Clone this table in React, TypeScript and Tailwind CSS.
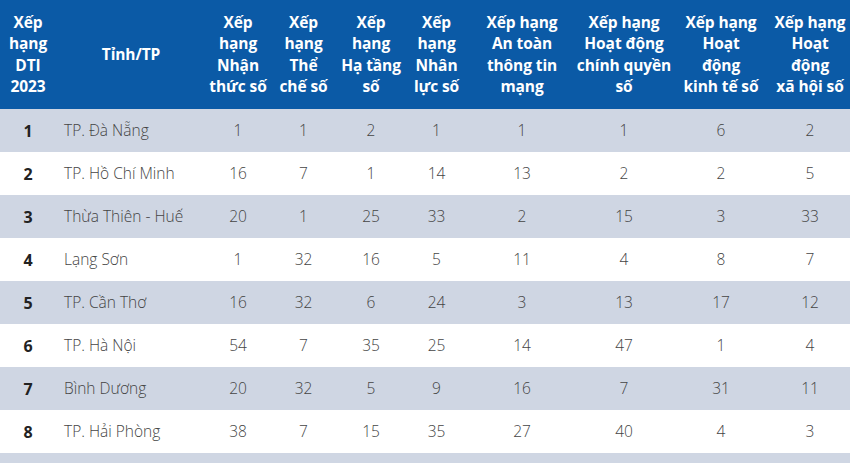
const cols = [
  "w-[56px]",
  "w-[150px]",
  "w-[64px]",
  "w-[67px]",
  "w-[68px]",
  "w-[63px]",
  "w-[108px]",
  "w-[96px]",
  "w-[98px]",
  "w-[80px]",
];

const headers: string[][] = [
  ["Xếp", "hạng", "DTI", "2023"],
  ["Tỉnh/TP"],
  ["Xếp", "hạng", "Nhận", "thức số"],
  ["Xếp", "hạng", "Thể", "chế số"],
  ["Xếp", "hạng", "Hạ tầng", "số"],
  ["Xếp", "hạng", "Nhân", "lực số"],
  ["Xếp hạng", "An toàn", "thông tin", "mạng"],
  ["Xếp hạng", "Hoạt động", "chính quyền", "số"],
  ["Xếp hạng", "Hoạt", "động", "kinh tế số"],
  ["Xếp hạng", "Hoạt", "động", "xã hội số"],
];

const rows: [number, string, number[]][] = [
  [1, "TP. Đà Nẵng", [1, 1, 2, 1, 1, 1, 6, 2]],
  [2, "TP. Hồ Chí Minh", [16, 7, 1, 14, 13, 2, 2, 5]],
  [3, "Thừa Thiên - Huế", [20, 1, 25, 33, 2, 15, 3, 33]],
  [4, "Lạng Sơn", [1, 32, 16, 5, 11, 4, 8, 7]],
  [5, "TP. Cần Thơ", [16, 32, 6, 24, 3, 13, 17, 12]],
  [6, "TP. Hà Nội", [54, 7, 35, 25, 14, 47, 1, 4]],
  [7, "Bình Dương", [20, 32, 5, 9, 16, 7, 31, 11]],
  [8, "TP. Hải Phòng", [38, 7, 15, 35, 27, 40, 4, 3]],
];

export default function App() {
  return (
    <div className="w-[850px] h-[463px] overflow-hidden bg-white font-['Open_Sans',sans-serif]">
      <table className="w-[850px] table-fixed border-collapse">
        <thead>
          <tr className="bg-[#0b5aa6] h-[109px]">
            {headers.map((lines, i) => (
              <th
                key={i}
                className={`${cols[i]} p-0 text-white font-bold text-[15.5px] leading-[21.5px] text-center align-middle tracking-[-0.1px]`}
              >
                {lines.map((l) => (
                  <div key={l} className="whitespace-nowrap">
                    {l}
                  </div>
                ))}
              </th>
            ))}
          </tr>
        </thead>
        <tbody>
          {rows.map(([rank, name, vals], r) => (
            <tr
              key={rank}
              className={`h-[43px] ${r % 2 === 0 ? "bg-[#cfd6e3]" : "bg-white"}`}
            >
              <td className="p-0 text-center text-[16px] font-bold text-[#222]">
                {rank}
              </td>
              <td className="p-0 pl-[8px] text-left text-[15.5px] font-light text-[#444] whitespace-nowrap">
                {name}
              </td>
              {vals.map((v, i) => (
                <td
                  key={i}
                  className="p-0 text-center text-[15.5px] font-light text-[#444]"
                >
                  {v}
                </td>
              ))}
            </tr>
          ))}
          <tr className="h-[43px] bg-[#cfd6e3]">
            <td colSpan={10} />
          </tr>
        </tbody>
      </table>
    </div>
  );
}
